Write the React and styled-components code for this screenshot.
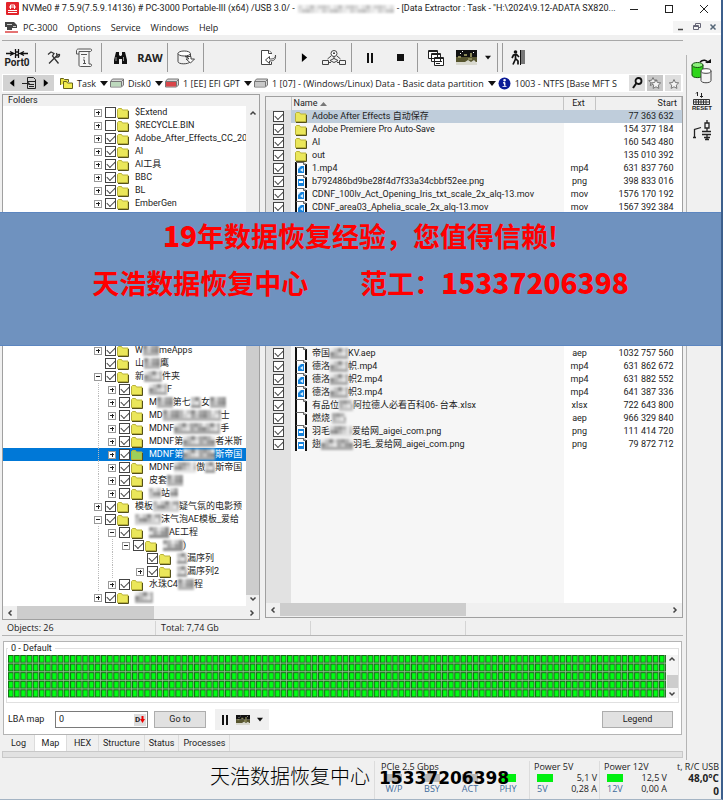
import styled, { createGlobalStyle } from "styled-components";

const uiFont = `"Open Sans", "Noto Sans CJK SC", sans-serif`;
const listFont = `Roboto, "Noto Sans CJK SC", sans-serif`;

const folders = [
	{ level: 0, toggle: "+", name: ["$Extend"] },
	{ level: 0, toggle: "+", name: ["$RECYCLE.BIN"] },
	{ level: 0, toggle: "+", checked: true, name: ["Adobe_After_Effects_CC_201"] },
	{ level: 0, toggle: "+", checked: true, name: ["AI"] },
	{ level: 0, toggle: "+", checked: true, name: ["AI工具"] },
	{ level: 0, toggle: "+", checked: true, name: ["BBC"] },
	{ level: 0, toggle: "+", checked: true, name: ["BL"] },
	{ level: 0, toggle: "+", checked: true, name: ["EmberGen"] },
];

// a number in a name is the width of a hidden part
const moreFolders = [
	{ level: 0, toggle: "+", checked: true, name: ["W", 16, "meApps"] },
	{ level: 0, checked: true, name: ["山", 16, "鹰"] },
	{ level: 0, toggle: "-", checked: true, name: ["新", 18, "件夹"] },
	{ level: 1, toggle: "+", checked: true, name: [18, "F"] },
	{ level: 1, toggle: "+", checked: true, name: ["M", 16, "第七", 10, "女", 16] },
	{ level: 1, toggle: "+", checked: true, name: ["MD", 58, "士"] },
	{ level: 1, toggle: "+", checked: true, name: ["MDNF", 46, "手"] },
	{ level: 1, toggle: "+", checked: true, name: ["MDNF第", 32, "者米斯"] },
	{ level: 1, toggle: "+", checked: true, selected: true, name: ["MDNF第", 32, "斯帝国"] },
	{ level: 1, toggle: "+", checked: true, name: ["MDNF", 22, "傲", 10, "斯帝国"] },
	{ level: 1, toggle: "+", checked: true, name: ["皮套", 16] },
	{ level: 1, toggle: "+", checked: true, name: [12, "站", 8] },
	{ level: 0, toggle: "+", checked: true, name: ["模板", 26, "疑气氛的电影预"] },
	{ level: 0, toggle: "-", checked: true, name: [26, "沫气泡AE模板_爱给"] },
	{ level: 1, toggle: "-", checked: true, name: [20, "AE工程"] },
	{ level: 2, toggle: "-", checked: true, name: [20, ")"] },
	{ level: 3, checked: true, name: [10, "漏序列"] },
	{ level: 3, toggle: "+", checked: true, name: [10, "漏序列2"] },
	{ level: 1, toggle: "+", checked: true, name: ["水珠C4", 16, "程"] },
	{ level: 0, toggle: "+", checked: true, name: [18] },
];

const files = [
	{ kind: "folder", name: ["Adobe After Effects 自动保存"], ext: "", start: "77 363 632", selected: true },
	{ kind: "folder", name: ["Adobe Premiere Pro Auto-Save"], ext: "", start: "154 377 184" },
	{ kind: "folder", name: ["AI"], ext: "", start: "160 543 480" },
	{ kind: "folder", name: ["out"], ext: "", start: "135 010 392" },
	{ kind: "video", name: ["1.mp4"], ext: "mp4", start: "631 837 760" },
	{ kind: "image", name: ["b792486bd9be28f4d7f33a34cbbf52ee.png"], ext: "png", start: "398 833 016" },
	{ kind: "video", name: ["CDNF_100lv_Act_Opening_Iris_txt_scale_2x_alq-13.mov"], ext: "mov", start: "1576 170 192" },
	{ kind: "video", name: ["CDNF_area03_Aphelia_scale_2x_alq-13.mov"], ext: "mov", start: "1567 392 384" },
];

const moreFiles = [
	{ kind: "file", name: ["帝国", 18, "KV.aep"], ext: "aep", start: "1032 757 560" },
	{ kind: "video", name: ["德洛", 18, "帜.mp4"], ext: "mp4", start: "631 862 672" },
	{ kind: "video", name: ["德洛", 18, "帜2.mp4"], ext: "mp4", start: "631 882 552" },
	{ kind: "video", name: ["德洛", 18, "帜3.mp4"], ext: "mp4", start: "641 387 336" },
	{ kind: "file", name: ["有品位", 14, "阿拉德人必看百科06- 台本.xlsx"], ext: "xlsx", start: "722 643 800" },
	{ kind: "file", name: ["燃烧.", 14], ext: "aep", start: "966 329 840" },
	{ kind: "image", name: ["羽毛", 22, "爱给网_aigei_com.png"], ext: "png", start: "111 414 720" },
	{ kind: "image", name: ["翅", 32, "羽毛_爱给网_aigei_com.png"], ext: "png", start: "79 872 712" },
];

const shades = ["#a9a9a9", "#d2d2d2", "#8f8f8f", "#c4c4c4", "#e4e4e4", "#b5b5b5", "#9c9c9c"];

const Mosaic = ({ width, height = 11, light }) => {
	const cells = [];
	for (let y = 0; y < height; y += 4) {
		for (let x = 0; x < width; x += 4) {
			const i = (x * 5 + y * 3 + ((x * y) >> 2) + width) % shades.length;
			cells.push(<rect key={x + "-" + y} x={x} y={y} width="4" height="4" fill={shades[i]} />);
		}
	}
	return (
		<MosaicSvg width={width} height={height} opacity={light ? 0.5 : 1}>
			{cells}
		</MosaicSvg>
	);
};

const Name = ({ parts }) =>
	parts.map((part, i) => (typeof part === "number" ? <Mosaic key={i} width={part} /> : <span key={i}>{part}</span>));

const FolderIcon = ({ green }) => (
	<svg width="12" height="12" viewBox="0 0 12 12">
		<path d="M.5 10.5v-8l1-1h3l1 1.500h5.500v7.500z" fill={green ? "#9bd05a" : "#ebe75a"} stroke="#b9b23a" />
		<path d="M1 11.500h10.500V4" fill="none" stroke="#55511a" />
	</svg>
);

const FileIcon = ({ kind }) => {
	if (kind === "folder") return <FolderIcon />;
	return (
		<svg width="12" height="13" viewBox="0 0 12 13">
			<path d="M1 0h8l2 2v11H1z" fill="#fff" />
			<path d="M1 0v13M11 2v11" stroke="#111" strokeWidth="2" />
			<path d="M1 .5h8l2 2H8.500V.5" fill="none" stroke="#666" />
			{kind !== "file" && <rect x="3" y="4" width="6" height="7" fill="#1783dc" />}
			{kind === "image" && <path d="M4 6h4v2H4z" fill="#fff" />}
			{kind === "video" && <path d="M3 4h3L3 7zM5 8l3-2v4z" fill="#d9efff" />}
		</svg>
	);
};

const Caret = ({ size = 8 }) => (
	<svg width={size} height="5" viewBox="0 0 8 5">
		<path d="M0 0h8L4 5z" fill="#111" />
	</svg>
);

const Chevron = ({ turn = 0 }) => (
	<svg width="8" height="8" viewBox="0 0 8 8">
		<path d="M1.500 5.500 4 3l2.500 2.500" fill="none" stroke="#444" strokeWidth="1.500" transform={`rotate(${turn} 4 4)`} />
	</svg>
);

const Triangle = ({ left, size = 8 }) => (
	<svg width={size} height={size + 2} viewBox="0 0 8 10">
		<path d={left ? "M7 0v10L1 5z" : "M1 0v10l6-5z"} fill="#000" />
	</svg>
);

const DiskIcon = ({ fill = "#c9c9c9" }) => (
	<svg width="14" height="12" viewBox="0 0 14 12">
		<path d="M.5 4.500 2.500 2h11v6l-2 2H.5z" fill="#d8d8d8" stroke="#777" />
		<path d="M1 5h10v4.500H1z" fill={fill} />
		<path d="M11.500 4.500v5M.5 4.500h11l2-2" stroke="#777" fill="none" />
	</svg>
);

const MapThumb = ({ w = 21, h = 15 }) => (
	<svg width={w} height={h} viewBox="0 0 21 15">
		<path d="M0 0h21v7H0z" fill="#111" />
		<path d="M0 7h21v5H0z" fill="#57552f" />
		<path d="M0 12h9l3-2 3 2 3-2 3 3v2H0z" fill="#d9d9cf" />
		<path d="M2 6h3v2H2zM8 4h3v2H8zM14 3h2v4h-2zM12 8h4v2h-4z" fill="#8a8858" />
		<path d="M6 1h1v1H6zM17 2h1v1h-1zM4 3h1v1H4z" fill="#fff" />
	</svg>
);

const PauseIcon = () => (
	<svg width="8" height="10" viewBox="0 0 8 10">
		<path d="M1 0h2v10H1zM5 0h2v10H5z" fill="#111" />
	</svg>
);

const StarIcon = ({ double }) => (
	<svg width="14" height="13" viewBox="0 0 14 13">
		{double && (
			<path d="m5 .5 1.300 2.700 3 .4-2.200 2 .6 3L5 7.200 2.300 8.600l.6-3-2.200-2 3-.4z" fill="#eee" stroke="#777" />
		)}
		<path
			d="m8 2.500 1.400 3 3.300.4-2.400 2.200.6 3.300L8 9.800l-2.900 1.600.6-3.300-2.400-2.200 3.300-.4z"
			fill="#f4f4f4"
			stroke="#777"
		/>
	</svg>
);

const App = () => {
	const treeRow = (row, i) => (
		<TreeRow key={i} $selected={row.selected}>
			{Array.from({ length: row.level }, (_, n) => (
				<Guide key={n} $line={n < 2} />
			))}
			<ToggleCell>{row.toggle && <Toggle aria-label="Expand folder">{row.toggle === "+" ? <PlusMark /> : <MinusMark />}</Toggle>}</ToggleCell>
			<TreeLabel>
				<Check type="checkbox" defaultChecked={row.checked} />
				<FolderIcon green={row.selected} />
				<TreeName>
					<Name parts={row.name} />
				</TreeName>
			</TreeLabel>
		</TreeRow>
	);

	const fileRow = (file, i) => (
		<FileRow key={i} $selected={file.selected}>
			<td>
				<Check type="checkbox" defaultChecked aria-label={"Select file " + file.start} />
			</td>
			<td>
				<FileName>
					<FileIcon kind={file.kind} />
					<NameText>
						<Name parts={file.name} />
					</NameText>
				</FileName>
			</td>
			<td>{file.ext}</td>
			<td>{file.start}</td>
		</FileRow>
	);

	return (
		<Window>
			<GlobalStyle />
			<TitleBar>
				<svg width="13" height="13" viewBox="0 0 13 13">
					<rect width="13" height="13" rx="1" fill="#e3242b" />
					<path d="M2 8.500h9M2 10.500h9M4.500 7V3h4v4M3 5h7" stroke="#fff" fill="none" />
				</svg>
				<Title>
					<span>NVMe0 # 7.5.9(7.5.9.14136) # PC-3000 Portable-III (x64) /USB 3.0/ -</span>
					<Mosaic width={96} height={8} light />
					<span>- [Data Extractor : Task - "H:\2024\9.12-ADATA SX820...</span>
				</Title>
				<WindowButton aria-label="Minimize">
					<svg width="10" height="10"><path d="M1 5.500h8" stroke="#222" /></svg>
				</WindowButton>
				<WindowButton aria-label="Maximize">
					<svg width="10" height="10"><rect x="1.500" y="1.500" width="7" height="7" fill="none" stroke="#222" /></svg>
				</WindowButton>
				<WindowButton aria-label="Close">
					<svg width="10" height="10"><path d="m1 1 8 8M9 1 1 9" stroke="#222" /></svg>
				</WindowButton>
			</TitleBar>
			<MenuBar>
				<svg width="13" height="12" viewBox="0 0 13 12">
					<path d="M0 1h9l3 3v3H7v2H2V6H0z" fill="#444" />
					<path d="M2 3h5v1H2zM8 5h3v1H8z" fill="#ccc" />
					<path d="M0 11h13" stroke="#d44" strokeWidth="1.500" />
				</svg>
				{["PC-3000", "Options", "Service", "Windows", "Help"].map((item) => (
					<MenuItem key={item}>{item}</MenuItem>
				))}
				<ChildButtons>
					<ChildButton aria-label="Minimize child">
						<svg width="8" height="8"><path d="M1 6.500h5" stroke="#444" strokeWidth="1.500" /></svg>
					</ChildButton>
					<ChildButton aria-label="Restore child">
						<svg width="8" height="8"><path d="M2.500 2V.5h5v4H6M.5 2.500h5v4h-5zM.5 3.500h5" fill="none" stroke="#667" /></svg>
					</ChildButton>
					<ChildButton aria-label="Close child">
						<svg width="8" height="8"><path d="m1.500 1.500 5 5M6.500 1.500l-5 5" stroke="#567" strokeWidth="1.500" /></svg>
					</ChildButton>
				</ChildButtons>
			</MenuBar>

			<Body>
				<Workspace>
					<Toolbar>
						<ToolGroup>
							<PortButton>
								<svg width="22" height="9" viewBox="0 0 22 9">
									<path d="M0 4.500h8M14 4.500h8M4 2.500l4 2-4 2M9.500 0v9M12.500 0v9M9 3h4M9 6h4M18 2.500l-4 2 4 2" stroke="#111" fill="none" strokeWidth="1.300" />
								</svg>
								Port0
							</PortButton>
						</ToolGroup>
						<ToolGroup>
							<ToolButton aria-label="Settings">
								<svg width="14" height="14" viewBox="0 0 14 14">
									<path d="M1 3.500 4 1l3 1.500L5.500 5l6 7.500" fill="none" stroke="#333" strokeWidth="1.300" />
									<path d="M12.500 3 10 4.500 9.500 2M10 4.500 2 12.500M12.500 3c.4 2.500-1.500 3.500-3.500 3" fill="none" stroke="#333" strokeWidth="1.300" />
								</svg>
							</ToolButton>
							<ToolButton aria-label="Script">
								<svg width="18" height="19" viewBox="0 0 18 19">
									<path d="M4 6H1.500V3c0-1 .5-2 2-2h12c1.500 0 1.500 2 0 2.500H4V17c0 1 .5 1.500 1.500 1.500h10c1 0 1.500-1.500.5-2.500h-2V3.500" fill="#f6f6f6" stroke="#555" />
									<path d="M6 6.500h6M9 9v1.500M8 12h1.500v3M8 15.500h3" stroke="#555" fill="none" />
								</svg>
							</ToolButton>
						</ToolGroup>
						<ToolGroup>
							<ToolButton aria-label="Find">
								<svg width="13" height="12" viewBox="0 0 13 12">
									<path d="M2 0h3v3l1 1h1l1-1V0h3l2 8v4H8V7H5v5H0V8z" fill="#111" />
									<path d="M2 5v4M9.500 5v4" stroke="#999" />
								</svg>
							</ToolButton>
							<RawButton>RAW</RawButton>
						</ToolGroup>
						<ToolGroup>
							<ToolButton aria-label="Export disk">
								<svg width="19" height="15" viewBox="0 0 19 15">
									<path d="M1 3.500v8c0 3 10 3 12 .5M13.500 3.500V6" fill="none" stroke="#444" />
									<ellipse cx="7.200" cy="3.500" rx="6.200" ry="2.500" fill="#fff" stroke="#444" />
									<path d="M8 6.500h6V9h3.500L13.500 13 9 9h2.500V8z" fill="#fff" stroke="#444" />
								</svg>
							</ToolButton>
						</ToolGroup>
						<ToolGroup $wide>
							<ToolButton aria-label="Import page">
								<svg width="17" height="16" viewBox="0 0 17 16">
									<path d="M11.500 4V3L9 .5H1.500v14h10V12" fill="#fff" stroke="#444" />
									<path d="M8.500.5v3h3M15.500 5c0 4-3 4-6 4V6.500L5.500 10l4 3.500V11c5 0 6.500-2 6-6z" fill="#fff" stroke="#444" />
								</svg>
							</ToolButton>
						</ToolGroup>
						<ToolGroup>
							<ToolButton aria-label="Start">
								<Triangle size={7} />
							</ToolButton>
							<ToolButton aria-label="Diagram">
								<svg width="24" height="16" viewBox="0 0 24 16">
									<circle cx="12" cy="3.500" r="3" fill="#fff" stroke="#444" />
									<path d="M11 3.500h2M12 2v2M12 6.500V9M9 6 5.500 9M15 6l3.500 3M.5 10.500h6v4h-6zM17.500 10.500h6v4h-6zM8 10.500l4-2 4 2-4 2zM6.500 12.500H9M15 12.500h2.500" fill="none" stroke="#444" />
								</svg>
							</ToolButton>
						</ToolGroup>
						<ToolGroup>
							<ToolButton aria-label="Pause">
								<PauseIcon />
							</ToolButton>
							<ToolButton aria-label="Stop">
								<svg width="7" height="7"><rect width="7" height="7" fill="#111" /></svg>
							</ToolButton>
						</ToolGroup>
						<ToolGroup>
							<ToolButton aria-label="Windows list">
								<svg width="16" height="16" viewBox="0 0 16 16">
									<path d="M.5.5h9v8h-9zM3.500 3.500h9v8h-9zM6.500 7.500h9v8h-9z" fill="#fff" stroke="#222" />
									<path d="M0 1.500h10M3 4.500h10M6 8.500h10M8 11.500h6M8 13.500h4" stroke="#222" />
								</svg>
							</ToolButton>
							<ToolButton aria-label="Map view">
								<MapThumb />
							</ToolButton>
							<CaretButton aria-label="Map view options">
								<Caret size={6} />
							</CaretButton>
						</ToolGroup>
						<ToolGap />
						<ToolButton aria-label="Exit">
							<svg width="15" height="15" viewBox="0 0 15 15">
								<circle cx="4.500" cy="2" r="1.800" fill="#111" />
								<path d="M4.500 4v5M1 8l1.500-3 3-.5L8 7M4.500 9 2 14.500M4.500 8.500l2.500 2.500v3.500" stroke="#111" strokeWidth="1.700" fill="none" />
								<path d="M9 0h5v14H9z" fill="#777" />
								<path d="M9.500 0v15" stroke="#111" />
							</svg>
						</ToolButton>
					</Toolbar>

					<PathBar>
						<NavButtons>
							<NavButton aria-label="Back"><Triangle left size={6} /></NavButton>
							<NavButton aria-label="Up">
								<svg width="14" height="12" viewBox="0 0 14 12">
									<path d="M5.500.5h6l2 2v9h-8zM6 4.500h7M7 7.500h5M7 9.500h5M0 6.500h5" stroke="#222" fill="none" />
									<path d="m5 4 3 2.500L5 9z" fill="#222" />
								</svg>
							</NavButton>
							<NavButton aria-label="Forward"><Triangle size={6} /></NavButton>
						</NavButtons>
						<Crumb href="#task">
							<svg width="13" height="12" viewBox="0 0 13 12">
								<path d="M.5 8V1.500h3l1 1h4V5" fill="#e8e13f" stroke="#66621a" />
								<path d="M3.500 11V4.500h3l1 1.500h5v5.500h-9z" fill="#f2ec4e" stroke="#66621a" />
							</svg>
							Task
							<Caret />
						</Crumb>
						<Crumb href="#disk0">
							<DiskIcon fill="#bcd8bc" />
							Disk0
							<Caret />
						</Crumb>
						<Crumb href="#gpt">
							<DiskIcon fill="#d9464a" />
							1 [EE] EFI GPT
							<Caret />
						</Crumb>
						<Crumb href="#data">
							<DiskIcon />
							1 [07] - (Windows/Linux) Data - Basic data partition
							<Caret />
						</Crumb>
						<Crumb href="#ntfs" $grow>
							<svg width="13" height="13" viewBox="0 0 13 13">
								<circle cx="6.500" cy="6.500" r="6" fill="#0b1c96" />
								<path d="M5 5.500h2v4M4.500 9.500h4M5.800 2.500h1.500v1.500H5.800z" stroke="#fff" fill="#fff" strokeWidth=".8" />
							</svg>
							<span>1003 - NTFS [Base MFT S</span>
						</Crumb>
						<SquareButton aria-label="Search">
							<svg width="11" height="12" viewBox="0 0 11 12">
								<circle cx="6.500" cy="4" r="3" fill="#eee" stroke="#111" strokeWidth="1.800" />
								<path d="M4.500 6 1 11" stroke="#111" strokeWidth="2" />
							</svg>
						</SquareButton>
						<SquareButton aria-label="Favourites" $dark><StarIcon double /></SquareButton>
						<SquareButton aria-label="Add favourite"><StarIcon /></SquareButton>
					</PathBar>

					<Panels>
						<FoldersPanel>
							<PanelTitle>Folders</PanelTitle>
							<TreeArea>
								<Tree>
									{folders.map(treeRow)}
									<TreeGap />
									{moreFolders.map(treeRow)}
								</Tree>
								<VScroll>
									<Chevron />
									<VTrack>
										<VThumb />
									</VTrack>
									<Chevron turn={180} />
								</VScroll>
							</TreeArea>
							<HScroll>
								<Chevron turn={-90} />
								<HTrack>
									<HThumb $share={60} />
								</HTrack>
								<Chevron turn={90} />
							</HScroll>
						</FoldersPanel>

						<FilesPanel>
							<FileTable>
								<thead>
									<tr>
										<th aria-label="Selected" />
										<th>
											Name{" "}
											<svg width="7" height="4" viewBox="0 0 7 4"><path d="M0 4h7L3.500 0z" fill="#777" /></svg>
										</th>
										<th>Ext</th>
										<th>Start</th>
									</tr>
								</thead>
								<tbody>
									{files.map(fileRow)}
									<FillRow $height={133}><td /><td /><td /><td /></FillRow>
									{moreFiles.map(fileRow)}
									<FillRow $height={152}><td /><td /><td /><td /></FillRow>
								</tbody>
							</FileTable>
							<HScroll>
								<Chevron turn={-90} />
								<HTrack>
									<HThumb $share={48} />
								</HTrack>
								<Chevron turn={90} />
							</HScroll>
						</FilesPanel>
					</Panels>

					<StatusBar>
						<StatusCell $width={154}>Objects: 26</StatusCell>
						<StatusCell $width={155}>Total: 7,74 Gb</StatusCell>
						<StatusCell $width={155} />
					</StatusBar>

					<MapPanel>
						<MapBox>
							<MapLegend>0 - Default</MapLegend>
							<MapArea>
								<MapGrid>
									<defs>
										<pattern id="sector" width="6.200" height="8.600" patternUnits="userSpaceOnUse">
											<rect width="6.200" height="8.600" fill="#a9c4a9" />
											<rect width="5.600" height="7.800" fill="#146a14" />
											<rect x="1" y="1" width="3.800" height="6" fill="#00ff14" />
										</pattern>
									</defs>
									<rect width="100%" height="43" fill="url(#sector)" />
								</MapGrid>
								<MapScroll>
									<Chevron />
									<MapThumbBar />
									<Chevron turn={180} />
								</MapScroll>
							</MapArea>
						</MapBox>
						<MapControls>
							<label htmlFor="lba">LBA map</label>
							<LbaField>
								<LbaInput id="lba" defaultValue="0" />
								<DecButton aria-label="Decimal">
									<span>D</span>
									<svg width="5" height="7" viewBox="0 0 5 7"><path d="M1.500 0h2v3H5L2.500 7 0 3h1.500z" fill="#e00" /></svg>
								</DecButton>
							</LbaField>
							<GrayButton $width={52}>Go to</GrayButton>
							<MapTools>
								<PlainButton aria-label="Pause map"><PauseIcon /></PlainButton>
								<PlainButton aria-label="Map mode"><MapThumb w={14} h={10} /></PlainButton>
								<PlainButton aria-label="Map mode options"><Caret size={6} /></PlainButton>
							</MapTools>
							<Spacer />
							<GrayButton $width={71}>Legend</GrayButton>
						</MapControls>
					</MapPanel>
					<Tabs role="tablist">
						{["Log", "Map", "HEX", "Structure", "Status", "Processes"].map((tab) => (
							<Tab key={tab} role="tab" aria-selected={tab === "Map"} $active={tab === "Map"}>
								{tab}
							</Tab>
						))}
					</Tabs>
					<Strip />
				</Workspace>

				<SideBar>
					<SideButton aria-label="Power">
						<svg width="22" height="25" viewBox="0 0 22 25">
							<path d="M1 6v10c0 3.500 11 3.500 11 0V6z" fill="#2fd51a" stroke="#164f10" />
							<ellipse cx="6.500" cy="6" rx="5.500" ry="2.500" fill="#8cf07c" stroke="#164f10" />
							<path d="M10 12v9.500c0 3 10 3 10 0V12z" fill="#f4f4f4" stroke="#444" />
							<ellipse cx="15" cy="12" rx="5" ry="2.300" fill="#fff" stroke="#444" />
							<path d="M9 3c3-3 7-2 8 1" fill="none" stroke="#111" strokeWidth="1.500" />
							<path d="M14 4h6V0z" fill="#111" />
						</svg>
					</SideButton>
					<SideButton aria-label="Reset">
						<svg width="17" height="13" viewBox="0 0 17 13">
							<path d="M4.500 0v4M3 1.500 4.500 0M8.500 1v4M7 4l1.500 1.500L10 4" stroke="#222" fill="none" />
							<path d="M.5 7.500h16v5H.5zM3 7v6M5.500 7v6M8 7v6M10.500 7v6M13 7v6M0 10h17" stroke="#333" fill="none" />
						</svg>
						RESET
					</SideButton>
					<SideButton aria-label="Circuit">
						<svg width="18" height="21" viewBox="0 0 18 21">
							<path d="M0 17.500h3M1.500 17V9.500L8 7.500M14 0v3M12 3h4v5h-4zM14 8v3M9 11.500h9M9 14.500h9M14 14.500V20M11 17.500h6M12 19.500h4" stroke="#222" fill="none" strokeWidth="1.300" />
						</svg>
					</SideButton>
				</SideBar>
			</Body>

			<Footer>
				<Contact>
					<span>天浩数据恢复中心</span>
					<b>15337206398</b>
				</Contact>
				<SignalGroup>
					<GroupName>PCIe 2.5 Gbps</GroupName>
					<Signals>
						{["W/P", "BSY", "ACT", "PHY"].map((name) => (
							<Signal key={name}>
								<Led $on={name === "PHY"} />
								<Blue>{name}</Blue>
							</Signal>
						))}
					</Signals>
				</SignalGroup>
				<PowerGroup>
					<GroupName>Power 5V</GroupName>
					<PowerLine><Led $on />5,1 V</PowerLine>
					<PowerLine><Blue>5V</Blue>0,28 A</PowerLine>
				</PowerGroup>
				<PowerGroup>
					<GroupName>Power 12V</GroupName>
					<PowerLine><Led $on />12,5 V</PowerLine>
					<PowerLine><Blue>12V</Blue>0,00 A</PowerLine>
				</PowerGroup>
				<TempGroup>
					<GroupName>t, R/C USB</GroupName>
					<b>48,0°C</b>
					<b>0</b>
				</TempGroup>
			</Footer>

			<Banner>
				<p><b>19</b>年数据恢复经验，您值得信赖!</p>
				<p>
					<span>天浩数据恢复中心</span>
					<span>范工：<b>15337206398</b></span>
				</p>
			</Banner>
		</Window>
	);
};

export default App;

const GlobalStyle = createGlobalStyle`
	* {
		box-sizing: border-box;
	}
	body {
		margin: 0;
		background: #f0f0f0;
		color: #222;
		font: 9px/13px ${uiFont};
	}
	button, input {
		margin: 0;
		padding: 0;
		border: 0;
		background: none;
		color: inherit;
		font: inherit;
	}
	svg {
		display: block;
		flex: none;
	}
	p {
		margin: 0;
	}
`;

const Window = styled.div`
	position: relative;
	min-height: 100vh;
	display: flex;
	flex-direction: column;
	border-right: 2px solid #3c5f8c;
	border-bottom: 1px solid #a4b4c4;
`;
const TitleBar = styled.header`
	height: 17px;
	display: flex;
	align-items: center;
	padding-left: 6px;
	background: #fff;
`;
const Title = styled.div`
	flex: 1;
	display: flex;
	align-items: center;
	gap: 3px;
	padding-left: 3px;
	font-family: Roboto, sans-serif;
	white-space: nowrap;
`;
const WindowButton = styled.button`
	width: 35px;
	display: flex;
	justify-content: center;
`;
const MenuBar = styled.nav`
	height: 18px;
	display: flex;
	align-items: center;
	gap: 10px;
	padding: 2px 0 0 5px;
	background: #fff;
`;
const MenuItem = styled.button`
	&:first-of-type {
		margin-left: -5px;
	}
`;
const ChildButtons = styled.div`
	display: flex;
	margin-left: auto;
`;
const ChildButton = styled.button`
	width: 16px;
	height: 12px;
	display: flex;
	align-items: center;
	justify-content: center;
	background: #f4f4f4;
`;

const Body = styled.div`
	flex: 1;
	display: flex;
`;
const Workspace = styled.main`
	flex: 1;
	min-width: 0;
	display: flex;
	flex-direction: column;
	padding: 5px 3px 0 2px;
`;
const Toolbar = styled.div`
	height: 32px;
	display: flex;
	border-top: 1px solid #a8a8a8;
	padding-top: 2px;
`;
const ToolGroup = styled.div`
	width: ${(props) => (props.$wide ? "82px" : "auto")};
	display: flex;
	justify-content: flex-end;
	padding: 0 2px 0 3px;
	border-right: 1px solid #9a9a9a;

	&:first-child {
		padding: 0 3px 0 0;
	}
`;
const ToolButton = styled.button`
	width: 30px;
	display: flex;
	align-items: center;
	justify-content: center;
`;
const PortButton = styled.button`
	width: 30px;
	display: flex;
	flex-direction: column;
	align-items: center;
	justify-content: center;
	font: bold 10px/9px ${listFont};
`;
const RawButton = styled(ToolButton)`
	font-weight: 700;
	font-size: 11px;
`;
const CaretButton = styled(ToolButton)`
	width: 14px;
`;
const ToolGap = styled.div`
	width: 5px;
	border-right: 1px solid #9a9a9a;
`;

const PathBar = styled.div`
	height: 18px;
	display: flex;
	align-items: center;
	gap: 2px;
	margin: 2px 0;
	padding: 0 2px 0 1px;
	background: #fff;
`;
const NavButtons = styled.div`
	display: flex;
	background: #d2d2d2;
	margin-right: 4px;
`;
const NavButton = styled.button`
	width: 17px;
	height: 16px;
	display: flex;
	align-items: center;
	justify-content: center;
`;
const Crumb = styled.a`
	flex: ${(props) => (props.$grow ? "1" : "none")};
	display: flex;
	align-items: center;
	gap: 4px;
	color: inherit;
	text-decoration: none;
	white-space: nowrap;
`;
const SquareButton = styled.button`
	width: 16px;
	height: 16px;
	display: flex;
	align-items: center;
	justify-content: center;
	background: ${(props) => (props.$dark ? "#c8c8c8" : "#dedede")};
`;

const Panels = styled.div`
	display: flex;
	gap: 5px;
`;
const FoldersPanel = styled.section`
	flex: 0 0 258px;
	min-width: 0;
	border: 1px solid #a0a0a0;
	font: 9px/13px ${listFont};
`;
const PanelTitle = styled.h2`
	margin: 0;
	padding-left: 5px;
	font: 9px/11px ${listFont};
`;
const TreeArea = styled.div`
	display: flex;
	background: #fff;
`;
const Tree = styled.ul`
	flex: 1;
	min-width: 0;
	margin: 0;
	padding: 0 0 2px;
	overflow: hidden;
	list-style: none;
`;
const TreeRow = styled.li`
	height: 13px;
	display: flex;
	align-items: center;
	padding-left: 88px;
	background: ${(props) => (props.$selected ? "#0078d7" : "none")};
	color: ${(props) => (props.$selected ? "#fff" : "inherit")};
`;
const TreeGap = styled.li`
	height: 134px;
`;
const Guide = styled.span`
	flex: none;
	width: 7px;
	height: 13px;
	margin-left: 7px;
	border-left: 1px dotted ${(props) => (props.$line ? "#bbb" : "transparent")};
`;
const ToggleCell = styled.span`
	flex: none;
	width: 14px;
	display: flex;
	justify-content: center;
`;
const Toggle = styled.button`
	width: 8px;
	height: 8px;
	border: 1px solid #999;
	background: #fff;
`;
const MinusMark = styled.span`
	display: block;
	height: 1px;
	margin: 0 1px;
	background: #222;
`;
const PlusMark = styled(MinusMark)`
	width: 4px;
	height: 4px;
	background: linear-gradient(#222, #222) center / 4px 1px no-repeat, linear-gradient(#222, #222) center / 1px 4px no-repeat;
`;
const TreeLabel = styled.label`
	display: flex;
	align-items: center;
	gap: 1px;
	white-space: nowrap;
`;
const TreeName = styled.span`
	display: flex;
	align-items: center;
	padding-left: 5px;
`;
const MosaicSvg = styled.svg`
	filter: blur(1px);
`;
const Check = styled.input`
	appearance: none;
	flex: none;
	display: flex;
	justify-content: center;
	width: 11px;
	height: 11px;
	border: 1px solid #444;
	background: #fff;

	&:checked::before {
		content: "";
		width: 7px;
		height: 4px;
		margin-top: 1px;
		border: solid #444;
		border-width: 0 0 1px 1px;
		transform: rotate(-45deg);
	}
`;
const VScroll = styled.div`
	width: 13px;
	display: flex;
	flex-direction: column;
	align-items: center;
	padding: 3px 0;
	background: #f0f0f0;
`;
const VTrack = styled.div`
	flex: 1;
	align-self: stretch;
	display: flex;
	flex-direction: column;
	justify-content: flex-end;
`;
const VThumb = styled.div`
	height: 80%;
	background: #cdcdcd;
`;
const HScroll = styled.div`
	height: 13px;
	display: flex;
	align-items: center;
	padding: 0 3px;
	background: #f0f0f0;
`;
const HTrack = styled.div`
	flex: 1;
	align-self: stretch;
	margin: 0 3px;
`;
const HThumb = styled.div`
	width: ${(props) => props.$share}%;
	height: 100%;
	background: #cdcdcd;
`;

const FilesPanel = styled.section`
	flex: 1;
	min-width: 0;
	margin: 2px 0;
	border: 1px solid #a0a0a0;
`;
const FileTable = styled.table`
	width: 100%;
	table-layout: fixed;
	border-collapse: collapse;
	font: 9px/13px ${listFont};

	th {
		height: 13px;
		padding: 0 4px 0 2px;
		border-right: 1px solid #c4c4c4;
		font-weight: 400;
		text-align: left;
	}
	th svg {
		display: inline-block;
		vertical-align: middle;
	}
	th:first-child {
		width: 25px;
	}
	th:nth-child(3) {
		width: 32px;
		text-align: center;
	}
	th:nth-child(4) {
		width: 86px;
		text-align: right;
	}
	td {
		padding: 0;
		background: #fff;
	}
	td:first-child {
		background: #e2e2e2;
	}
	td:nth-child(2) {
		background: #f6f6f6;
	}
	td:nth-child(3) {
		text-align: center;
	}
	td:nth-child(4) {
		padding-right: 8px;
		text-align: right;
	}
`;
const FileRow = styled.tr`
	height: 13px;

	&& td:nth-child(n + 2) {
		background: ${(props) => (props.$selected ? "#bfcddb" : "")};
	}
	td:first-child input {
		margin: 0 auto;
	}
`;
const FillRow = styled.tr`
	height: ${(props) => props.$height}px;
`;
const FileName = styled.div`
	height: 13px;
	display: flex;
	align-items: center;
	gap: 5px;
	padding-left: 4px;
	white-space: nowrap;
`;
const NameText = styled.span`
	display: flex;
	align-items: center;
	white-space: pre;
`;

const StatusBar = styled.div`
	height: 16px;
	display: flex;
	align-items: center;
	border-bottom: 1px solid #b4b4b4;
`;
const StatusCell = styled.div`
	width: ${(props) => props.$width}px;
	height: 14px;
	padding-left: 5px;
	border-right: 1px solid #d4d4d4;
`;

const MapPanel = styled.section`
	margin: 5px 1px 0;
	border: 1px solid #b4b4b4;
	background: #fff;
	font: 9px/13px ${listFont};
`;
const MapBox = styled.fieldset`
	min-width: 0;
	margin: 0 2px;
	padding: 0 0 4px 1px;
	border: 1px solid #e0e0e0;
`;
const MapLegend = styled.legend`
	padding: 0 3px;
`;
const MapArea = styled.div`
	display: flex;
`;
const MapGrid = styled.svg`
	flex: 1;
	min-width: 0;
	height: 43px;
`;
const MapScroll = styled.div`
	width: 12px;
	display: flex;
	flex-direction: column;
	align-items: center;
	justify-content: space-between;
	background: #f4f4f4;
`;
const MapThumbBar = styled.div`
	width: 11px;
	height: 13px;
	margin-top: 10px;
	background: #cdcdcd;
`;
const MapControls = styled.div`
	display: flex;
	align-items: center;
	gap: 6px;
	padding: 6px 8px 4px 4px;

	label {
		width: 41px;
		white-space: nowrap;
	}
`;
const LbaField = styled.div`
	width: 93px;
	height: 17px;
	display: flex;
	align-items: center;
	border: 1px solid #7a7a7a;
	padding: 1px;
`;
const LbaInput = styled.input`
	flex: 1;
	min-width: 0;
	padding-left: 2px;
`;
const DecButton = styled.button`
	width: 12px;
	height: 12px;
	display: flex;
	align-items: center;
	justify-content: center;
	background: #ddd;
	font: bold 8px/10px ${listFont};
`;
const GrayButton = styled.button`
	width: ${(props) => props.$width}px;
	height: 17px;
	border: 1px solid #adadad;
	background: #e1e1e1;
`;
const MapTools = styled.div`
	height: 21px;
	display: flex;
	align-items: center;
	gap: 7px;
	margin-left: 3px;
	padding: 0 6px;
	background: #f0f0f0;
`;
const PlainButton = styled.button`
	display: flex;
`;
const Spacer = styled.div`
	flex: 1;
`;
const Tabs = styled.div`
	height: 16px;
	display: flex;
	margin-left: 1px;
`;
const Tab = styled.button`
	min-width: 32px;
	padding: 0 4px;
	border-right: 1px solid #dcdcdc;
	background: ${(props) => (props.$active ? "#fff" : "none")};
	font: 9px/13px ${listFont};
`;
const Strip = styled.div`
	height: 7px;
	border: 1px solid #c8c8c8;
	background: #e2e2e2;
`;

const SideBar = styled.aside`
	width: 35px;
	display: flex;
	flex-direction: column;
	align-items: center;
	gap: 8px;
	margin-top: 20px;
	padding: 4px 4px 0 0;
	border-left: 1px solid #b4b4b4;
`;
const SideButton = styled.button`
	display: flex;
	flex-direction: column;
	align-items: center;
	font: bold 6px/7px "Liberation Sans", sans-serif;
`;

const Footer = styled.footer`
	position: relative;
	height: 39px;
	display: flex;
	justify-content: flex-end;
	padding: 1px 2px 0 0;
	line-height: 11px;
`;
const Contact = styled.div`
	position: absolute;
	left: 210px;
	top: 5px;
	display: flex;
	align-items: baseline;
	gap: 9px;
	font: 300 20px/22px "Noto Sans CJK SC", sans-serif;
	color: #000;
	white-space: nowrap;

	b {
		font: bold 17px/22px "DejaVu Sans", sans-serif;
	}
`;
const GroupName = styled.div`
	height: 11px;
	white-space: nowrap;
`;
const SignalGroup = styled.div`
	width: 155px;
	border-left: 1px solid #dcdcdc;

	${GroupName} {
		padding-left: 6px;
	}
`;
const Signals = styled.div`
	display: grid;
	grid-template-columns: repeat(4, 38px);
`;
const Signal = styled.div`
	display: flex;
	flex-direction: column;
	align-items: center;
`;
const Led = styled.span`
	width: 16px;
	height: 8px;
	margin: 2px 0 1px;
	background: ${(props) => (props.$on ? "#00f010" : "#b8b8b8")};
`;
const Blue = styled.span`
	color: #3f6c9c;
`;
const PowerGroup = styled.div`
	width: 70px;
	padding: 0 2px 0 4px;
	border-left: 1px solid #dcdcdc;
`;
const PowerLine = styled.div`
	display: flex;
	justify-content: space-between;
	padding-left: 3px;
`;
const TempGroup = styled.div`
	width: 50px;
	display: flex;
	flex-direction: column;
	align-items: flex-end;

	b {
		font-size: 10px;
		line-height: 13px;
	}
`;

// advert laid over the window
const Banner = styled.div`
	position: absolute;
	top: 212px;
	left: 0;
	right: 0;
	height: 134px;
	background: #6f92bf;
	border: solid #5c86c0;
	border-width: 1px 0;
	color: #f00;
	font: bold 27px/44px "Noto Sans CJK SC", sans-serif;

	p {
		display: flex;
		align-items: baseline;
		justify-content: center;
	}
	p + p {
		margin-top: 2px;
	}
	span + span {
		margin-left: 52px;
	}
	b {
		font-size: 28px;
	}
`;
